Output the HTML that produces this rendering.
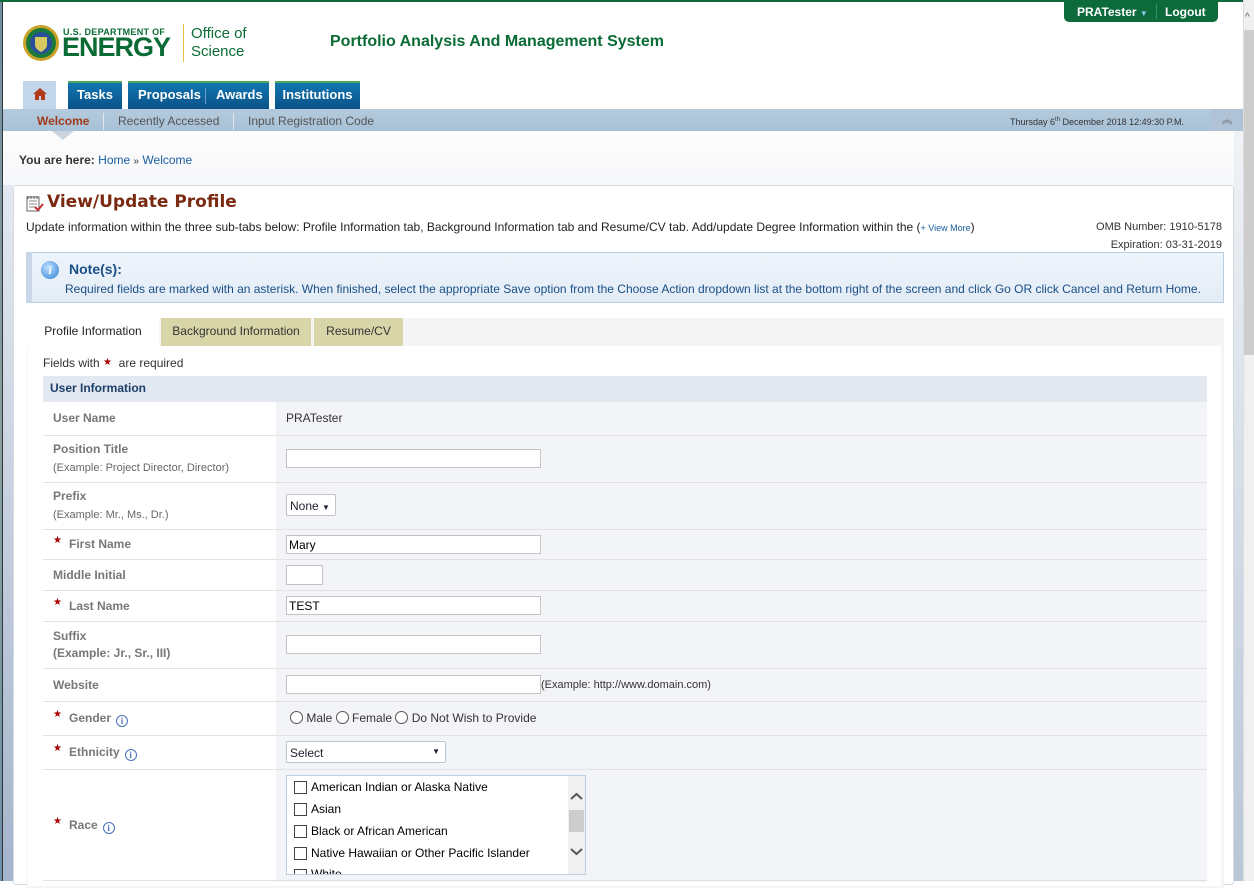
<!DOCTYPE html>
<html><head><meta charset="utf-8"><style>
*{box-sizing:border-box;margin:0;padding:0}
body{width:1254px;height:881px;overflow:hidden;background:#fff;font-family:"Liberation Sans",Arial,sans-serif;font-size:12px;color:#333;position:relative}
.a{position:absolute}
.lbl{position:absolute;left:53px;font-weight:bold;color:#777;font-size:12px}
.sub{font-weight:normal;font-size:11px;color:#666}
.star{color:#a00;font-size:10px;position:absolute;left:-2px;top:-2px;font-family:"DejaVu Sans",sans-serif}
.inp{position:absolute;left:286px;width:255px;height:19px;border:1px solid #c4c4c4;background:#fff;font-size:12px;padding:2px 2px;color:#000}
.row{position:absolute;left:43px;width:1164px;border-bottom:1px solid #e2e2e2}
.info{display:inline-block;width:12px;height:12px;border:1px solid #4a6fc0;border-radius:50%;color:#4a6fc0;font-size:9px;text-align:center;line-height:10px;font-weight:bold;vertical-align:-2px;margin-left:5px;font-family:"Liberation Serif",serif}
.rad{display:inline-block;width:13px;height:13px;border:1px solid #555;border-radius:50%;vertical-align:-2px;background:#fff}
.cb{position:absolute;left:294px;width:13px;height:13px;border:1px solid #444;background:#fff}
.cbt{position:absolute;left:311px;font-size:12px;color:#000}
</style></head><body>
<div class="a" style="left:0;top:0;width:3px;height:881px;background:linear-gradient(#6f8fa0,#8aa0a0 50%,#6a90a8)"></div>
<div class="a" style="left:2px;top:0;width:1px;height:881px;background:#333"></div>
<div class="a" style="left:3px;top:130px;width:10px;height:751px;background:linear-gradient(#e8edf3,#a4b4cb)"></div>
<div class="a" style="left:1234px;top:130px;width:9px;height:751px;background:linear-gradient(#f0f3f6,#b8c6d8)"></div>
<div class="a" style="left:1243px;top:0;width:11px;height:881px;background:#f0f0f0;border-left:1px solid #ddd"></div>
<div class="a" style="left:1244px;top:30px;width:10px;height:325px;background:#cdcdcd"></div>
<div class="a" style="left:1245px;top:12px;font-size:10px;color:#555">^</div>
<div class="a" style="left:0;top:0;width:1243px;height:2px;background:#0d6a3a"></div>

<svg class="a" style="left:22px;top:24px" width="38" height="38" viewBox="0 0 38 38"><circle cx="19" cy="19" r="18" fill="#c9a227"/><circle cx="19" cy="19" r="15" fill="#1a7a3a"/><circle cx="19" cy="19" r="11" fill="#2a4f9a"/><path d="M13 13h12v8c0 4-6 7-6 7s-6-3-6-7z" fill="#d8c860"/></svg>
<div class="a" style="left:63px;top:27px;font-size:9px;font-weight:bold;color:#0b6b35;letter-spacing:.3px">U.S. DEPARTMENT OF</div>
<div class="a" style="left:62px;top:33px;font-size:27px;line-height:28px;font-weight:bold;color:#0b6b35;letter-spacing:-1px;transform:scaleX(1.0)">ENERGY</div>
<div class="a" style="left:183px;top:24px;width:1px;height:38px;background:#e8c040"></div>
<div class="a" style="left:191px;top:25px;font-size:15px;color:#0b6b35;line-height:18px">Office of<br>Science</div>
<div class="a" style="left:330px;top:33px;font-size:16px;font-weight:bold;color:#0b6b35">Portfolio Analysis And Management System</div>
<div class="a" style="left:1064px;top:0;width:154px;height:22px;background:#0d6a3a;border-radius:0 0 5px 5px"></div>
<div class="a" style="left:1077px;top:5px;color:#fff;font-weight:bold;font-size:12px">PRATester <span style="color:#8cc8e8;font-size:8px">▼</span></div>
<div class="a" style="left:1156px;top:4px;width:1px;height:15px;background:#2a9a5a"></div>
<div class="a" style="left:1165px;top:5px;color:#fff;font-weight:bold;font-size:12px">Logout</div>

<div class="a" style="left:23px;top:81px;width:33px;height:28px;background:#c3d5e8"></div>
<svg class="a" style="left:32px;top:87px" width="16" height="14" viewBox="0 0 16 14"><path d="M8 1L1 7h2v6h4V9h2v4h4V7h2z" fill="#b03a1a"/></svg>
<div class="a" style="left:68px;top:81px;width:54px;height:28px;background:linear-gradient(#1275b0,#0a5288);border-top:2px solid #4caa5a;color:#fff;font-weight:bold;font-size:13px;text-align:center;line-height:24px">Tasks</div>
<div class="a" style="left:128px;top:81px;width:141px;height:28px;background:linear-gradient(#1275b0,#0a5288);border-top:2px solid #4caa5a;color:#fff;font-weight:bold;font-size:13px;line-height:24px"><span style="position:absolute;left:10px">Proposals</span><span style="position:absolute;left:77px;top:5px;width:1px;height:16px;background:#6aa0c8"></span><span style="position:absolute;left:88px">Awards</span></div>
<div class="a" style="left:275px;top:81px;width:85px;height:28px;background:linear-gradient(#1275b0,#0a5288);border-top:2px solid #4caa5a;color:#fff;font-weight:bold;font-size:13px;text-align:center;line-height:24px">Institutions</div>
<div class="a" style="left:3px;top:109px;width:1240px;height:22px;background:linear-gradient(#b4cbdd,#a8c1d6)"></div>
<div class="a" style="left:1211px;top:109px;width:32px;height:22px;background:#b0c2d6;color:#666;font-size:11px;text-align:center;line-height:22px">︽</div>
<div class="a" style="left:37px;top:114px;font-size:12px;font-weight:bold;color:#a03a1a">Welcome</div>
<div class="a" style="left:103px;top:113px;width:1px;height:17px;background:#e0e8f0"></div>
<div class="a" style="left:118px;top:114px;font-size:12px;color:#555">Recently Accessed</div>
<div class="a" style="left:233px;top:113px;width:1px;height:17px;background:#e0e8f0"></div>
<div class="a" style="left:248px;top:114px;font-size:12px;color:#555">Input Registration Code</div>
<div class="a" style="left:1010px;top:117px;font-size:9px;color:#333">Thursday 6<sup style="font-size:6px">th</sup> December 2018 12:49:30 P.M.</div>
<div class="a" style="left:3px;top:131px;width:1231px;height:54px;background:linear-gradient(#fdfdfd,#f6f7f9)"></div>
<div class="a" style="left:52px;top:131px;width:0;height:0;border-left:11px solid transparent;border-right:11px solid transparent;border-top:9px solid #c9d4de"></div>
<div class="a" style="left:19px;top:153px;font-size:12px;color:#333"><b>You are here:</b> <span style="color:#1a5ea0">Home</span> <span style="font-size:10px">»</span> <span style="color:#1a5ea0">Welcome</span></div>

<div class="a" style="left:13px;top:185px;width:1221px;height:700px;background:#fff;border:1px solid #d6dbe0;border-radius:3px"></div>
<svg class="a" style="left:26px;top:195px" width="18" height="17" viewBox="0 0 18 17"><rect x="1" y="2" width="12" height="14" fill="#fff" stroke="#666"/><path d="M3 6h8M3 9h8M3 12h6" stroke="#888"/><path d="M2 1v3M5 1v3M8 1v3M11 1v3" stroke="#555"/><path d="M9 12l3 3 5-6" stroke="#c03030" stroke-width="2" fill="none"/></svg>
<div class="a" style="left:47px;top:192px;font-size:17px;font-weight:bold;color:#7a2a10;font-family:'DejaVu Sans','Liberation Sans',sans-serif">View/Update Profile</div>
<div class="a" style="left:26px;top:220px;font-size:12px;color:#222">Update information within the three sub-tabs below: Profile Information tab, Background Information tab and Resume/CV tab. Add/update Degree Information within the (<span style="color:#1a5ea0;font-size:9px">+ View More</span>)</div>
<div class="a" style="left:1060px;top:218px;width:162px;text-align:right;font-size:11px;color:#333;line-height:18px">OMB Number: 1910-5178<br>Expiration: 03-31-2019</div>

<div class="a" style="left:26px;top:252px;width:1198px;height:51px;background:linear-gradient(#eef4fb,#e3ecf6);border:1px solid #b9cde0;border-left:6px solid #c8d8e8"></div>
<div class="a" style="left:41px;top:261px;width:18px;height:18px;border-radius:50%;background:radial-gradient(circle at 40% 35%,#bfe0ff,#2d7fd8);color:#fff;font-weight:bold;font-style:italic;font-size:12px;text-align:center;line-height:18px;font-family:'Liberation Serif',serif">i</div>
<div class="a" style="left:69px;top:261px;font-size:14px;font-weight:bold;color:#1a4f86">Note(s):</div>
<div class="a" style="left:65px;top:282px;font-size:12px;color:#1a4f86">Required fields are marked with an asterisk. When finished, select the appropriate Save option from the Choose Action dropdown list at the bottom right of the screen and click Go OR click Cancel and Return Home.</div>

<div class="a" style="left:27px;top:318px;width:1197px;height:570px;background:#f4f4f4"></div>
<div class="a" style="left:28px;top:346px;width:1193px;height:540px;background:#fff"></div>
<div class="a" style="left:27px;top:318px;width:132px;height:28px;background:#fff;font-size:12px;color:#222;text-align:center;line-height:26px">Profile Information</div>
<div class="a" style="left:161px;top:318px;width:150px;height:28px;background:#d8d6a8;font-size:12px;color:#333;text-align:center;line-height:26px">Background Information</div>
<div class="a" style="left:314px;top:318px;width:89px;height:28px;background:#d8d6a8;font-size:12px;color:#333;text-align:center;line-height:26px">Resume/CV</div>
<div class="a" style="left:43px;top:356px;font-size:12px;color:#333">Fields with <span style="color:#a00;font-size:10px;vertical-align:2px;font-family:'DejaVu Sans',sans-serif">★</span>&nbsp; are required</div>

<div class="a" style="left:43px;top:376px;width:1164px;height:26px;background:#e3e7ef;font-weight:bold;color:#1a3f6a;font-size:12px;padding:5px 7px">User Information</div>
<div class="a" style="left:276px;top:402px;width:931px;height:480px;background:#f3f4f8"></div>
<div class="row" style="top:402px;height:34px"></div>
<div class="row" style="top:435px;height:48px"></div>
<div class="row" style="top:482px;height:48px"></div>
<div class="row" style="top:529px;height:31px"></div>
<div class="row" style="top:559px;height:32px"></div>
<div class="row" style="top:590px;height:32px"></div>
<div class="row" style="top:621px;height:48px"></div>
<div class="row" style="top:668px;height:34px"></div>
<div class="row" style="top:701px;height:35px"></div>
<div class="row" style="top:735px;height:35px"></div>
<div class="row" style="top:769px;height:112px"></div>

<div class="lbl" style="top:411px">User Name</div>
<div class="a" style="left:286px;top:411px;font-size:12px;color:#333">PRATester</div>
<div class="lbl" style="top:442px">Position Title<br><span class="sub" style="line-height:24px">(Example: Project Director, Director)</span></div>
<div class="inp" style="top:449px"></div>
<div class="lbl" style="top:489px">Prefix<br><span class="sub" style="line-height:24px">(Example: Mr., Ms., Dr.)</span></div>
<div class="a" style="left:286px;top:494px;width:50px;height:22px;border:1px solid #c4c4c4;border-radius:2px;background:#fff;font-size:12px;color:#223;padding:4px 3px">None <span style="font-size:8px">▼</span></div>
<div class="lbl" style="top:537px;left:69px"><span class="star" style="left:-16px">★</span>First Name</div>
<div class="inp" style="top:535px">Mary</div>
<div class="lbl" style="top:568px">Middle Initial</div>
<div class="inp" style="top:565px;width:37px;height:20px"></div>
<div class="lbl" style="top:599px;left:69px"><span class="star" style="left:-16px">★</span>Last Name</div>
<div class="inp" style="top:596px">TEST</div>
<div class="lbl" style="top:629px">Suffix<br><span style="line-height:20px">(Example: Jr., Sr., III)</span></div>
<div class="inp" style="top:635px"></div>
<div class="lbl" style="top:678px">Website</div>
<div class="inp" style="top:675px"></div>
<div class="a" style="left:541px;top:679px;font-size:11px;color:#333">(Example: http://www.domain.com)</div>
<div class="lbl" style="top:711px;left:69px"><span class="star" style="left:-16px">★</span>Gender<span class="info">i</span></div>
<div class="a" style="left:290px;top:711px;font-size:12px;color:#333"><span class="rad"></span> Male <span class="rad"></span> Female <span class="rad"></span> Do Not Wish to Provide</div>
<div class="lbl" style="top:745px;left:69px"><span class="star" style="left:-16px">★</span>Ethnicity<span class="info">i</span></div>
<div class="a" style="left:286px;top:741px;width:160px;height:22px;border:1px solid #b8c8d8;border-radius:2px;background:#fff;font-size:12px;color:#223;padding:4px 3px">Select<span style="position:absolute;right:5px;top:5px;font-size:8px">▼</span></div>
<div class="lbl" style="top:818px;left:69px"><span class="star" style="left:-16px">★</span>Race<span class="info">i</span></div>
<div class="a" style="left:286px;top:775px;width:300px;height:100px;border:1px solid #b8cfe8;background:#fff;overflow:hidden"></div>
<div class="a" style="left:568px;top:776px;width:17px;height:98px;background:#f0f0f0"></div>
<div class="a" style="left:569px;top:810px;width:15px;height:22px;background:#cdcdcd"></div>
<svg class="a" style="left:570px;top:792px" width="13" height="9" viewBox="0 0 13 9"><path d="M1 7l5.5-5 5.5 5" stroke="#555" stroke-width="2" fill="none"/></svg>
<svg class="a" style="left:570px;top:847px" width="13" height="9" viewBox="0 0 13 9"><path d="M1 2l5.5 5 5.5-5" stroke="#555" stroke-width="2" fill="none"/></svg>
<div class="cb" style="top:781px"></div><div class="cbt" style="top:780px">American Indian or Alaska Native</div>
<div class="cb" style="top:803px"></div><div class="cbt" style="top:802px">Asian</div>
<div class="cb" style="top:825px"></div><div class="cbt" style="top:824px">Black or African American</div>
<div class="cb" style="top:847px"></div><div class="cbt" style="top:846px">Native Hawaiian or Other Pacific Islander</div>
<div class="a" style="left:287px;top:866px;width:280px;height:8px;overflow:hidden"><div class="cb" style="left:7px;top:3px"></div><div class="cbt" style="left:24px;top:1px">White</div></div>
</body></html>
